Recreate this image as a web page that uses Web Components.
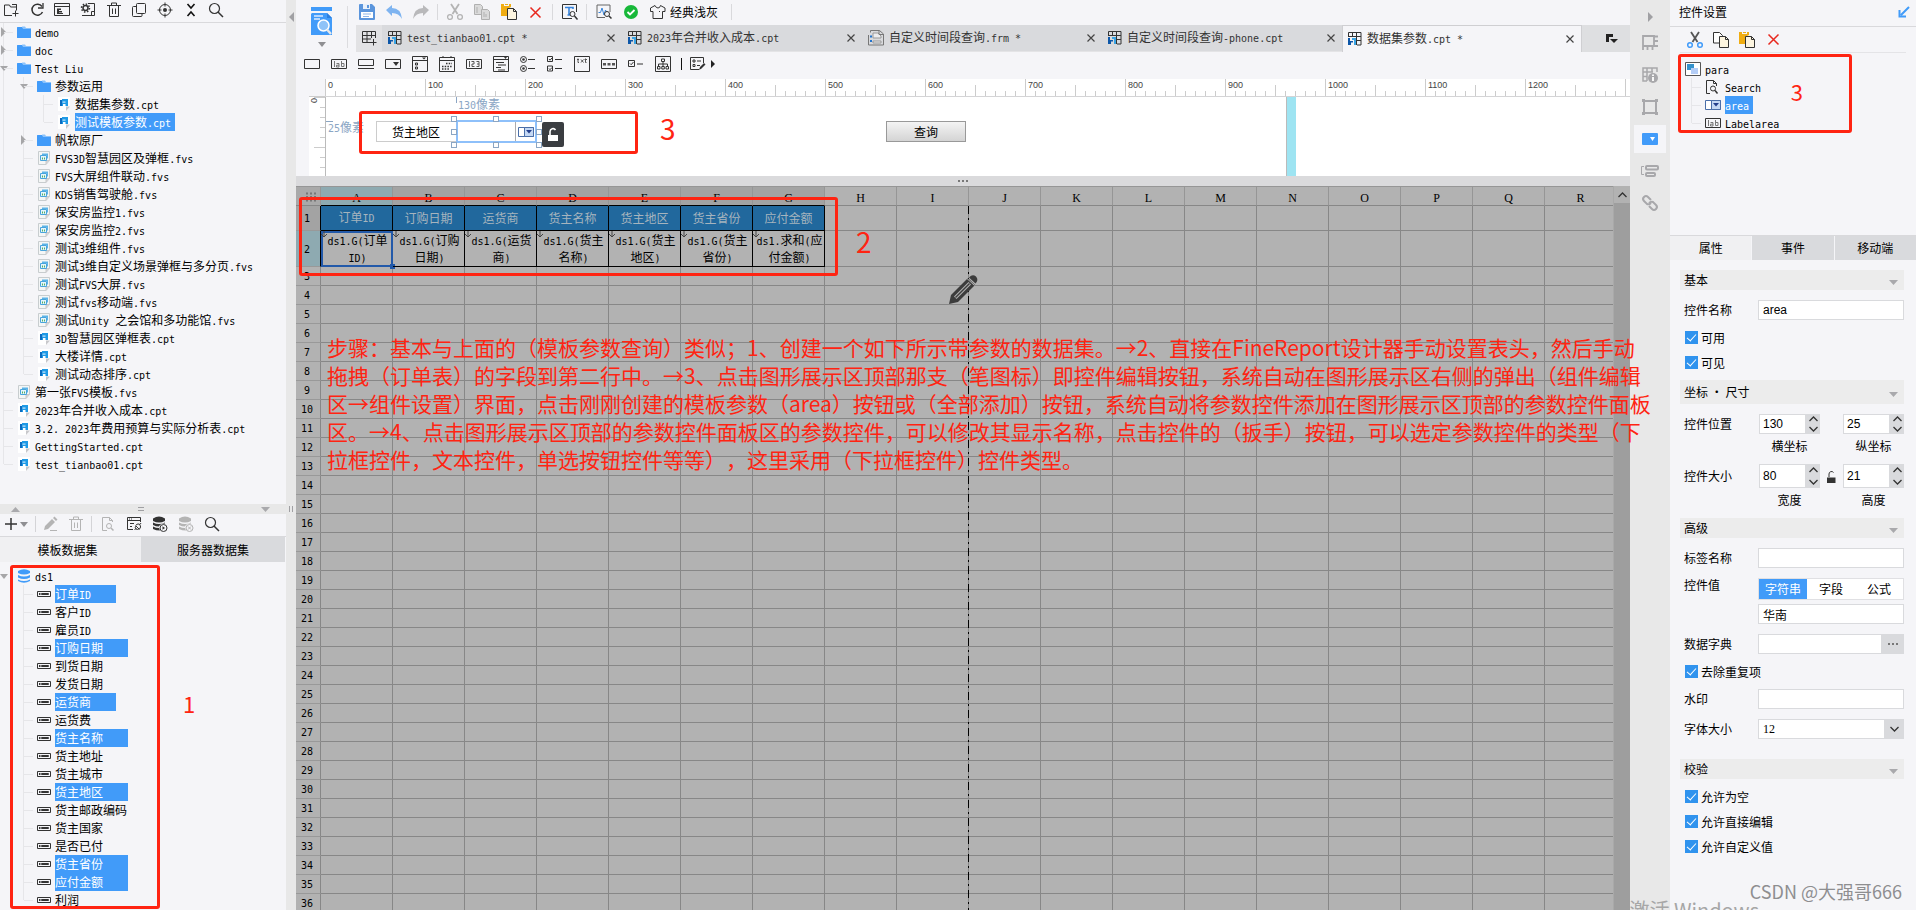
<!DOCTYPE html>
<html lang="zh-CN">
<head>
<meta charset="utf-8">
<title>FineReport 设计器</title>
<style>
html,body{margin:0;height:100%}
body{font:12px/18px "Noto Sans CJK SC",sans-serif;color:#000;background:#f5f5f8;overflow:hidden}
</style>
</head>
<body>
<designer-app></designer-app>
<script>
const BASE = `*{box-sizing:border-box}
button{font:inherit;color:inherit;border:0;padding:0;margin:0;background:none;display:inline-flex;align-items:center;justify-content:center}
input,select{font:inherit;margin:0}
.l{font-family:"DejaVu Sans Mono",monospace;font-size:10px;white-space:pre}`;

/* Latin runs are set in the narrow mono face beside the 12px CJK glyphs */
const mix = s => s.replace(/[\x20-\x7e]+/g, m => `<span class="l">${m}</span>`);

const def = (name, css, html, after) => customElements.define(name, class extends HTMLElement {
  constructor() {
    super();
    this.attachShadow({ mode: 'open' });
  }
  connectedCallback() {
    const t = document.createElement('template');
    t.innerHTML = `<style>${BASE}${css}</style>${typeof html === 'function' ? html(this) : html}`;
    this.shadowRoot.replaceChildren(t.content.cloneNode(true));
    if (after) after(this);
  }
});

const K = '#333', G = '#b4b4b4', B = '#419bf9';
const st = (c, w = 1) => `fill="none" stroke="${c}" stroke-width="${w}"`;
const ICONS = {
  folder: [14, 12, `<path d="M0 1.500Q0 1 .5 1H5l1.500 1H14v9.500q0 .5-.5.500H.5Q0 12 0 11.500z" fill="${B}"/><path d="M5 .5h3L9 2h5v1H6z" fill="#8cc3fb"/>`],
  cpt: [12, 14, '<path d="M0 0h12v9.500L8 14H0z" fill="#fff"/><path d="M12 9.500H8V14z" fill="#c8c8cb"/><path d="M2 3h3v6H2z" fill="#0c6cc0"/><path d="M4 2h6v7H7.500V7H5v2H4z" fill="#1f9ae6"/><path d="M4.500 4.500h3v1.200h-3z" fill="#cfe8fa"/>'],
  fvs: [12, 14, '<path d="M.5.5h11v9L8 13.500H.5z" fill="#f4f6f6" stroke="#c8cdcf"/><path d="M11.500 9.500H8v4" fill="#d4d4d6" stroke="#c8c8ca"/><path d="M4 2.500h6v5H9V4H4z" fill="#5cb4e8"/><path d="M2.500 4.500h6v5h-6z" fill="#e6f4fb" stroke="#48a4dc"/><path d="M4 6.500h1v2H4zM6 6.500h1v2H6z" fill="#52b06a"/>'],
  db: [12, 14, `<path d="M0 2q6-3.500 12 0v2q-6 3-12 0zM0 6q6 3 12 0v2.500q-6 3-12 0zM0 10.500q6 3 12 0V12q-6 3.500-12 0z" fill="${B}"/>`],
  field: [14, 6, `<path d="M.5.5h13v5H.5zM4.500 2.500h7v1h-7z" ${st(K)}/><path d="M2 2h1.500v2H2z" fill="${K}"/>`],
  newfolder: [16, 16, `<path d="M9 13.500H1.500V3h5l1 2h6V2.500H9M13.500 2.500v6M9.500 11.500h6M12.500 8.500v6" ${st(K)}/>`],
  refresh: [16, 16, `<path d="M13 4.500A5.500 5.500 0 1 0 13.500 10" ${st(K, 1.5)}/><path d="M14 1v5H9" ${st(K, 1.3)}/>`],
  tplpage: [16, 16, `<path d="M.5 1.500h15v12H.5zM.5 4.500h15" ${st(K)}/><path d="M3 6.500h4v1.500H5V9h3v1.500H5V11h4v1H3z" fill="${K}"/>`],
  gearpage: [16, 16, `<path d="M8 1.500h6.500v12H2M14.500 9.500h-3v4" ${st(K)}/><circle cx="5.500" cy="6" r="2.500" ${st(K, 1.5)}/><circle cx="5.500" cy="6" r="4" ${st(K, 1.5)} stroke-dasharray="1.500 1.600"/>`],
  trash: [14, 16, `<path d="M0 3.500h14M4.500 3V1h5v2M2.500 4v10.500h9V4M5.500 6.500v5.500M8.500 6.500v5.500" ${st(K)}/>`],
  trashg: [14, 16, `<path d="M0 3.500h14M4.500 3V1h5v2M2.500 4v10.500h9V4M5.500 6.500v5.500M8.500 6.500v5.500" ${st(G)}/>`],
  copy2: [14, 16, `<rect x="4.500" y="1.500" width="9" height="10" rx="1" ${st(K)}/><path d="M4 4.500H1.500q-1 0-1 1v8q0 1 1 1H9q1 0 1-1V12" ${st(K)}/>`],
  target: [16, 16, `<circle cx="8" cy="8" r="5.500" ${st(K)}/><circle cx="8" cy="8" r="2" fill="${K}"/><path d="M8 .5v4M8 11.500v4M.5 8h4M11.500 8h4" ${st(K)}/>`],
  collapse: [10, 14, '<path d="M1.500 1l3.500 4 3.500-4M1.500 13l3.500-4 3.500 4" fill="none" stroke="#111" stroke-width="1.600"/>'],
  search: [16, 16, `<circle cx="6.500" cy="6.500" r="5" ${st(K, 1.2)}/><path d="M10 10l5 5" ${st(K, 1.5)}/>`],
  plus: [12, 12, `<path d="M6 0v12M0 6h12" ${st(K, 1.5)}/>`],
  down: [8, 5, '<path d="M0 0h8L4 5z" fill="#8f8f92"/>'],
  downg: [10, 5, '<path d="M0 0h9L4.500 5z" fill="#a9a9ac"/>'],
  upg: [10, 5, '<path d="M0 5h9L4.500 0z" fill="#a9a9ac"/>'],
  lefta: [5, 10, '<path d="M5 0v10L0 5z" fill="#a0a0a3"/>'],
  righta: [5, 10, '<path d="M0 0v10l5-5z" fill="#a0a0a3"/>'],
  rightk: [4, 8, '<path d="M0 0v8l4-4z" fill="#222"/>'],
  eq: [6, 4, '<path d="M0 .5h6M0 3.500h6" stroke="#a0a0a3"/>'],
  bars: [4, 6, '<path d="M.5 0v6M3.500 0v6" stroke="#a0a0a3"/>'],
  pencilg: [16, 16, `<path d="M2 10l7-7 3 3-7 7-4 1zM10 2l1.500-1.500 3 3L13 5z" fill="${G}"/><path d="M7 14.500h7" stroke="${G}"/>`],
  docsearchg: [14, 16, `<path d="M6 14.500H1.500v-13h7l3 3V6M8.500 1.500v3h3" ${st(G)}/><circle cx="8" cy="10" r="2.500" ${st(G)}/><path d="M10 12l2.500 2.500" stroke="${G}" stroke-width="1.500"/>`],
  winplug: [16, 16, `<path d="M7 13.500H1.500v-12h13V6M1.500 4.500h13M4 7.500h4M4 10.500h2" ${st(K)}/><path d="M3 3h1M5 3h1" stroke="${K}"/><path d="M8.500 14l1.500-1.500M9.500 9.500l4 4M10 9q2-2 4-.5l1-1.500M13.500 13q2-2 .500-4M10 10q-1.500 2 0 3 1.500 1 3-.2" ${st(K)}/>`],
  dbplay: [16, 16, `<path d="M1 2.500q6-4 12 0V5q-6 3-12 0zM1 6.500q6 3 12 0v1q-5 0-6 3-3 0-6-1.500zM1 10.500q3 1.500 6 1.500l1 2.500q-4 0-7-1.500z" fill="${K}"/><circle cx="11.500" cy="12" r="3.500" fill="#f5f5f8" stroke="${K}"/><path d="M10.500 10.300v3.400l2.500-1.700z" fill="${K}"/>`],
  dbx: [16, 16, `<path d="M1 2.500q6-4 12 0V5q-6 3-12 0zM1 6.500q6 3 12 0v1q-5 0-6 3-3 0-6-1.500zM1 10.500q3 1.500 6 1.500l1 2.500q-4 0-7-1.500z" fill="${G}"/><circle cx="11.500" cy="12" r="3.500" fill="#f5f5f8" stroke="${G}"/><path d="M10 10.500l3 3M13 10.500l-3 3" stroke="${G}"/>`],
  preview: [22, 30, `<path d="M0 0h21v4H0z" fill="${B}"/><path d="M1 6h15l5 5v17H0V7z" fill="${B}"/><path d="M16 6v5h5" fill="#2b7fe0"/><path d="M3 9h9M3 12h6" stroke="#dcecff" stroke-width="1.500"/><circle cx="12.500" cy="18.500" r="5.500" fill="#8fc3f8" stroke="#fff" stroke-width="1.500"/><path d="M16 22.500l4 4.500" stroke="#e8e8e8" stroke-width="2.500"/>`],
  save: [16, 16, '<path d="M0 1q0-1 1-1h12l3 3v12q0 1-1 1H1q-1 0-1-1z" fill="#5b95dc"/><path d="M4 0h7v5H4z" fill="#e8f0fa"/><path d="M8 1h2v3H8z" fill="#5b95dc"/><path d="M2 8h12v6H2z" fill="#fff"/><path d="M4 10h8M4 12.500h6" stroke="#8fb6e8"/>'],
  undo: [16, 16, '<path d="M0 6l6-5v3q9 0 10 11-3-6-10-6v3z" fill="#7fb4f0"/>'],
  redo: [16, 16, '<path d="M16 6l-6-5v3Q1 4 0 15q3-6 10-6v3z" fill="#b9b9bb"/>'],
  cutg: [16, 16, `<path d="M4 0l6.500 10M12 0L5.500 10" ${st(G, 1.800)}/><circle cx="3" cy="13" r="2.400" ${st(G, 1.300)}/><circle cx="13" cy="13" r="2.400" ${st(G, 1.300)}/>`],
  cut: [16, 16, `<path d="M4 0l6.500 10M12 0L5.500 10" ${st('#555', 1.800)}/><circle cx="3" cy="13" r="2.300" ${st(B, 1.500)}/><circle cx="13" cy="13" r="2.300" ${st(B, 1.500)}/>`],
  copyg: [16, 16, '<path d="M.5.5h6l2 2v8h-8z" fill="#dadada" stroke="#b0b0b0"/><path d="M7.500 5.500h6l2 2v8h-8z" fill="#dadada" stroke="#b0b0b0"/><path d="M3 3v6M10 8v5M12 10v3" stroke="#b0b0b0"/>'],
  copy: [16, 16, '<path d="M.5.500h6l3 3v7.500h-9z" fill="#fff" stroke="#333"/><path d="M6.500 4.500h6l3 3v8h-9z" fill="#fdf5e0" stroke="#333"/><path d="M12.500 4.500v3h3" fill="none" stroke="#333"/>'],
  paste: [16, 16, '<path d="M0 0h3v2h5V0h2v3L6 5v7H0z" fill="#f0ad12"/><path d="M4 0h3v1H4z" fill="#f0ad12"/><path d="M6.500 4.500h6l3 3v8h-9z" fill="#fdf5e0" stroke="#333"/><path d="M12.500 4.500v3h3" fill="none" stroke="#333"/>'],
  redx: [11, 11, '<path d="M.5.5l10 10M10.500.5l-10 10" stroke="#e8281e" stroke-width="1.500"/>'],
  tsearch: [16, 16, `<path d="M10 14.500H.5V.5h14V8" ${st(K)}/><path d="M3 3.500h8V5M7 3v8M5.500 11h3" ${st('#3584dd', 1.600)}/><circle cx="10.500" cy="10" r="2.500" fill="#f5f5f8" stroke="${K}"/><path d="M12.500 12l3 3.500" stroke="${K}" stroke-width="1.500"/>`],
  pulse: [16, 16, `<path d="M9 13.500H1V1h13v7" ${st('#666')}/><path d="M2.500 8.500h2L6 4l2 7 1.500-5 1 2" ${st('#3584dd')}/><circle cx="11" cy="10" r="2.500" fill="#f5f5f8" stroke="${K}"/><path d="M13 12l2.500 2.500" stroke="${K}" stroke-width="1.500"/>`],
  ok: [14, 14, '<circle cx="7" cy="7" r="7" fill="#18b83a"/><path d="M3.500 7l2.500 2.500L10.500 5" fill="none" stroke="#fff" stroke-width="1.800"/>'],
  shirt: [16, 16, `<path d="M5 1.500L.5 4v3.500H3v7h9.500v-7H15V4l-4.500-2.500q-.5 2.500-2.500 2.500T5 1.500zM9 7.500h1" ${st(K)}/>`],
  gridadd: [15, 15, `<path d="M8 11.500H.5V.5h13V7M.5 4.500h13M.5 8H9M5 .5v11M9.500.5V7M8 11.500h6.500M11.500 8v6.500" ${st(K)}/>`],
  tabcpt: [14, 14, '<path d="M.5 5V.5h12.500V13H9M.5 4.500H13M4.500.5v4M8.500.5V13M9 8.500h4" fill="none" stroke="#333"/><path d="M0 6h2v3h3v1.500H3V13H0z" fill="#0c56a8"/><path d="M4 6h4v7H6V8H4z" fill="#39a4e4"/>'],
  tabfrm: [16, 16, '<path d="M2.500 2.500v-2h9l4 3.500v11H.5V5" fill="none" stroke="#777"/><path d="M5 3h5l3 3v2H5zM5 11h8v2H5z" fill="#ececee" stroke="#999"/><path d="M11 .5v4h4" fill="none" stroke="#777"/><path d="M2 5.500h2v2H2zM2 10h2v2H2z" fill="#2273cc"/>'],
  close: [8, 8, '<path d="M.5.5l7 7M7.500.5l-7 7" stroke="#444" stroke-width="1.200"/>'],
  overflow: [12, 10, '<path d="M0 0h7v3H3v5H0z" fill="#222"/><path d="M4 5h8L8 9z" fill="#222"/>'],
  w0: [16, 10, `<path d="M.5.5h15v9H.5z" ${st(K)}/>`],
  w1: [16, 10, `<path d="M.5.5h15v9H.5z" ${st(K)}/><path d="M3.500 2v6M5.500 4.500h2.500V8H5.500V6.200H8M10.500 2v5.500H13v-3h-2.500" ${st('#777')}/>`],
  w2: [16, 10, `<path d="M.5.5h15v6H.5zM0 9.500h16" ${st(K)}/>`],
  w3: [16, 10, `<path d="M.5.500h15v9H.5z" ${st(K)}/><path d="M8 3h6l-3 4z" fill="${K}"/>`],
  w4: [16, 16, `<path d="M.5.500h15v15H.5zM.5 4.500h15M3.500 7h2v2h-2zM3.500 11h2v2h-2z" ${st(K)}/><path d="M10 1.500h4l-2 2z" fill="${K}"/>`],
  w5: [16, 16, `<path d="M.5 1.500h15v14H.5zM.5 4.500h15M4 0v2M12 0v2" ${st(K)}/><path d="M7 7.500h6M3 10.500h10M3 13h7" stroke="${K}" stroke-width="1.600" stroke-dasharray="1.500 1.200"/>`],
  w6: [16, 10, `<path d="M.5.5h15v9H.5z" ${st(K)}/><path d="M3.500 2v6M5.500 2.500h2.500v2.500H6v2.500h2.500M10.500 2.500h2.500v5h-2.500M11 5h2" ${st('#555')}/>`],
  w7: [16, 16, `<path d="M.5.500h15v15H.5zM.5 3.500h15M3 6.500h8M5 9h8M3 11.500h5M5 14h7" ${st(K)}/><path d="M11 1h3l-1.500 2z" fill="${K}"/>`],
  w8: [15, 16, `<circle cx="3.500" cy="3.500" r="3" ${st(K)}/><circle cx="3.500" cy="3.500" r="1.300" fill="${K}"/><circle cx="3.500" cy="12.500" r="3" ${st(K)}/><circle cx="3.500" cy="12.500" r="1.300" fill="${K}"/><path d="M8 3.500h7M8 12.500h7" stroke="${K}"/>`],
  w9: [15, 16, `<path d="M.5.5h5v5h-5zM.5 10h5v5h-5zM8 3.500h7M8 12.500h7M2 3l1 1.200L5 2M2 12.500l1 1.200 2-2.200" ${st(K)}/>`],
  w10: [16, 16, `<path d="M.5.5h15v15H.5z" ${st(K)}/><path d="M4 2.500v4h1M3 3.500h2M7 3.500l2.500 3M9.500 3.500L7 6.500M11.500 2.500v4h1M10.500 3.500h2.500" ${st('#555')}/>`],
  w11: [16, 10, `<path d="M.5.500h15v9H.5z" ${st(K)}/><path d="M2 4h3v2.500H2zM6.500 4h3v2.500h-3zM11 4h3v2.500h-3z" fill="#555"/>`],
  w12: [15, 8, `<path d="M.5.500h6v6h-6zM9 4h6M2 3.500l1.200 1.200L5.500 2" ${st(K)}/>`],
  w13: [16, 16, `<path d="M.5.500h15v15H.5zM6.500 3h3v2.500h-3zM2.500 10.500h2.500v2.500H2.500zM6.800 10.500h2.500v2.500H6.800zM11 10.500h2.500v2.500H11zM8 5.500v5M3.500 10V8h9v2" ${st(K)}/>`],
  w14: [16, 16, `<path d="M9 13.500H.5v-12h13V7M3 4h2v2H3zM7 5h4M3 8.500h2v2H3zM7 9.500h3" ${st(K)}/><path d="M9 14l1-3 4-4 1.500 1.500-4 4z" fill="${K}"/>`],
  combo: [16, 10, '<path d="M.5.500h15v9H.5z" fill="#fff" stroke="#4a6ea8"/><path d="M6.500.500h9v9h-9z" fill="#c4d8f4" stroke="#4a6ea8"/><path d="M8 3h6L11 6.500z" fill="#243f8c"/>'],
  unlockw: [12, 16, '<path d="M3 8V4.500a3 3 0 0 1 5.500-1.500" fill="none" stroke="#fff" stroke-width="1.600"/><path d="M1 8h10v6H1z" fill="#fff"/>'],
  unlock: [9, 14, '<path d="M2 7V4a2.500 2.500 0 0 1 4.500-1.500" fill="none" stroke="#333"/><path d="M0 7.500h8.500V13H0z" fill="#333"/>'],
  pencil: [30, 30, '<path d="M1 29l2-9L20 3l7 7-17 17z" fill="#3c3c3c"/><path d="M6 21.500L20.500 7l2.500 2.500L8.500 24z" fill="#b2b2b2"/><path d="M7.500 22.500L21.500 8.500" stroke="#3c3c3c" stroke-width="1.500"/><path d="M19 3.500l7.500 7" stroke="#b2b2b2" stroke-width="1"/><path d="M21 2.500q3.500-4 7-1 3 3.500-.5 7z" fill="#3c3c3c"/>'],
  dots: [11, 9, '<path d="M1 1.500h11M1 5h11M1 8.500h11" stroke="#777" stroke-width="2" stroke-dasharray="2 2"/>'],
  dot3: [11, 3, '<path d="M0 0h2v2H0zM4 0h2v2H4zM8 0h2v2H8z" fill="#777"/>'],
  chevu: [9, 6, '<path d="M.5 5l4-4 4 4" fill="none" stroke="#333" stroke-width="1.300"/>'],
  chevd: [9, 6, '<path d="M.5 1l4 4 4-4" fill="none" stroke="#333" stroke-width="1.300"/>'],
  r1: [16, 16, '<path d="M1 1h11v10H1zM1 1v14M5.500 11v4M10.500 11v4M12 1.500h4M12 6h4M12 11h4" fill="none" stroke="#a8a8ab" stroke-width="1.800"/>'],
  r2: [16, 16, '<path d="M5 14H1V1h14v4M1 5h10M5 1v13M10 1v4M1 9.500h4" fill="none" stroke="#a8a8ab" stroke-width="1.500"/><circle cx="11" cy="11" r="5" fill="#a8a8ab"/><path d="M11 7.500v1.500M11 10v4" stroke="#fff" stroke-width="1.800"/>'],
  r3: [16, 16, '<path d="M2 2h12v12H2z" fill="none" stroke="#a8a8ab" stroke-width="2"/><path d="M0 0h3v3H0zM13 0h3v3h-3zM0 13h3v3H0zM13 13h3v3h-3z" fill="#a8a8ab"/>'],
  r4: [16, 12, `<rect width="16" height="12" rx="1" fill="${B}"/><path d="M8 4h5l-2.500 4z" fill="#fff"/>`],
  r5: [18, 12, '<path d="M3 1.500H.5v8H3" fill="none" stroke="#a8a8ab"/><rect x="5" y="1" width="12" height="3.500" rx="1" fill="none" stroke="#a8a8ab" stroke-width="2"/><rect x="5" y="8" width="9" height="3" rx="1" fill="none" stroke="#a8a8ab" stroke-width="2"/>'],
  r6: [16, 16, '<path d="M9 5L6 2Q4 0 2 2T2 6l3 3q2 1 4-1M7 11l3 3q2 2 4 0t0-4l-3-3Q9 6 7 8" fill="none" stroke="#a8a8ab" stroke-width="2"/>'],
  pin: [12, 12, `<path d="M11 1L3 9M1.500 4v6.500H8" ${st(B, 2)}/>`],
  para: [16, 14, '<path d="M.5.500h15v13H.5z" fill="#fff" stroke="#555"/><path d="M2 2h7v6H2z" fill="#3492cc"/><path d="M6 6h7v6H6z" fill="#b4cdf6"/>'],
  docsearch: [14, 14, `<path d="M5 13.500H1.500V.5h7l3 3V6M8.500.5v3h3" ${st(K)}/><circle cx="8" cy="8.500" r="2.500" ${st(K)}/><path d="M10 10.500l2.500 3" stroke="${K}" stroke-width="1.500"/>`],
  mark: [7, 7, '<path d="M3 0v6M0 3l3 3 3-3" fill="none" stroke="#444"/>']
};

def('app-icon', ':host{display:inline-flex;flex:none}svg{display:block;overflow:visible}', el => {
  const [w, h, body] = ICONS[el.getAttribute('name')];
  return `<svg width="${w}" height="${h}" viewBox="0 0 ${w} ${h}" aria-hidden="true">${body}</svg>`;
});
const ic = n => `<app-icon name="${n}"></app-icon>`;
const ib = (n, label = n) => `<button type="button" aria-label="${label}">${ic(n)}</button>`;

/* Tree rows: [depth, icon, text, state] */
const FILES = [
  [0, 'folder', 'demo', 'closed'], [0, 'folder', 'doc', 'closed'], [0, 'folder', 'Test Liu', 'open'],
  [1, 'folder', '参数运用', 'open'], [2, 'cpt', '数据集参数.cpt'], [2, 'cpt', '测试模板参数.cpt', 'sel'],
  [1, 'folder', '帆软原厂', 'closed'], [1, 'fvs', 'FVS3D智慧园区及弹框.fvs'], [1, 'fvs', 'FVS大屏组件联动.fvs'],
  [1, 'fvs', 'KDS销售驾驶舱.fvs'], [1, 'fvs', '保安房监控1.fvs'], [1, 'fvs', '保安房监控2.fvs'],
  [1, 'fvs', '测试3维组件.fvs'], [1, 'fvs', '测试3维自定义场景弹框与多分页.fvs'], [1, 'fvs', '测试FVS大屏.fvs'],
  [1, 'fvs', '测试fvs移动端.fvs'], [1, 'fvs', '测试Unity 之会馆和多功能馆.fvs'], [1, 'cpt', '3D智慧园区弹框表.cpt'],
  [1, 'cpt', '大楼详情.cpt'], [1, 'cpt', '测试动态排序.cpt'], [0, 'fvs', '第一张FVS模板.fvs'],
  [0, 'cpt', '2023年合并收入成本.cpt'], [0, 'cpt', '3.2. 2023年费用预算与实际分析表.cpt'],
  [0, 'cpt', 'GettingStarted.cpt'], [0, 'cpt', 'test_tianbao01.cpt']];
const DS = [[0, 'db', 'ds1', 'open'], ...[
  ['订单ID', 1], ['客户ID'], ['雇员ID'], ['订购日期', 1], ['到货日期'], ['发货日期'], ['运货商', 1], ['运货费'], ['货主名称', 1],
  ['货主地址'], ['货主城市'], ['货主地区', 1], ['货主邮政编码'], ['货主国家'], ['是否已付'], ['货主省份', 1], ['应付金额', 1], ['利润']
].map(([t, s]) => [1, 'field', t, s ? 'sel' : ''])];
const PARA = [[0, 'para', 'para', ''], [1, 'docsearch', 'Search', ''], [1, 'combo', 'area', 'sel'], [1, 'w1', 'Labelarea', '']];
const TREES = { files: FILES, ds: DS, para: PARA };

def('tree-view', `
:host{display:block;--end:4px}
:host([src=ds]){--end:25px}
ul{list-style:none;margin:0;padding:0}
li{display:flex;height:18px;align-items:center;white-space:nowrap}
.g{width:20px;height:18px;flex:none;position:relative}
.g.own{width:17px}
.v::before{content:"";position:absolute;left:3px;top:0;bottom:0;width:1px;background:#e6e6e9}
.half::before{bottom:9px}
.h::after{content:"";position:absolute;left:4px;top:9px;width:9px;height:1px;background:#e6e6e9}
.arr{position:absolute;left:1px;top:4px;width:0;height:0}
.arr.closed{border:5px solid transparent;border-left-color:#a6a6a8;border-right:0}
.arr.open{border:4px solid transparent;border-top:5px solid #a6a6a8;left:0;top:7px}
.i{width:14px;flex:none;display:flex;justify-content:center}
:host([src=para]) .i{width:16px;justify-content:flex-start}
.t{margin-left:4px;padding-right:var(--end);height:18px;line-height:18px}
.t.sel{background:#419bf9;color:#fff}
`, el => {
  const src = el.getAttribute('src'), rows = TREES[src];
  const more = (i, l) => {
    for (let j = i + 1; j < rows.length; j++) {
      if (rows[j][0] < l) return false;
      if (rows[j][0] === l) return true;
    }
    return false;
  };
  return '<ul>' + rows.map(([d, icon, text, state = ''], i) => {
    let g = '';
    const skip = src === 'files' ? 0 : 1;
    for (let l = 0; l < d; l++) g += `<span class="g ${l >= skip && more(i, l) ? 'v' : ''}"></span>`;
    const arrow = state === 'open' || state === 'closed';
    const own = d >= skip ? (more(i, d) ? 'v h' : 'v half h') : '';
    g += `<span class="g own ${own}">${arrow ? `<span class="arr ${state}"></span>` : ''}</span>`;
    return `<li>${g}<span class="i">${ic(icon)}</span><span class="t ${state}">${mix(text)}</span></li>`;
  }).join('') + '</ul>';
});

def('file-panel', `
:host{display:flex;flex-direction:column;height:504px;flex:none}
.bar{border-bottom:1px solid #d9d9dc;height:23px}
.row{display:flex;width:231px;height:20px;margin-left:-2px}
.row button{flex:1}
`, `<div class="bar"><div class="row">${['newfolder', 'refresh', 'tplpage', 'gearpage', 'trash', 'copy2', 'target', 'collapse', 'search'].map(n => ib(n)).join('')}</div></div>
<tree-view src="files"></tree-view>`);

def('data-panel', `
:host{display:flex;flex-direction:column;flex:1;min-height:0;overflow:hidden}
.bar{display:flex;height:23px;flex:none;align-items:center;border-bottom:1px solid #d9d9dc;padding:0 0 2px 4px}
.bar button{width:25px;height:20px;flex:none}
.bar .add{width:24px;gap:3px;margin-right:7px}
.sep{width:1px;height:16px;background:#d4d4d7;margin:0 2px 0 0}
.bar .g{margin:0 3px}
.bar .g~button{width:26px}
.tabs{display:flex;height:25px;flex:none;margin-right:1px}
.tabs button{flex:1;background:#d9dadd}
.tabs button.on{background:#f0f0f2;flex:0 0 141px;padding-right:6px}
tree-view{margin-top:5px}
`, `<div class="bar"><button class="add" type="button" aria-label="添加">${ic('plus')}${ic('down')}</button><span class="sep"></span>${ib('pencilg')}${ib('trashg')}<span class="sep g"></span>${['docsearchg', 'winplug', 'dbplay', 'dbx', 'search'].map(n => ib(n)).join('')}</div>
<div class="tabs" role="tablist"><button class="on" role="tab">模板数据集</button><button role="tab">服务器数据集</button></div>
<tree-view src="ds"></tree-view>`);

def('left-dock', `
:host{display:flex;flex-direction:column;width:286px;min-height:0;background:#f5f5f8}
.split{height:10px;flex:none;background:#e8e8e8;display:flex;align-items:center;justify-content:space-between;padding:0 15px 0 11px}
`, `<file-panel></file-panel><div class="split">${ic('upg')}${ic('eq')}${ic('downg')}</div><data-panel></data-panel>`);

def('dock-split', `
:host{display:flex;flex-direction:column;align-items:center;width:10px;background:#e8e8e8;padding-top:12px}
.m{margin-top:476px}
`, `${ic('lefta')}<span class="m">${ic('bars')}</span>`);

def('doc-bar', `
:host{display:grid;grid-template-columns:60px 1fr;height:52px;background:#f5f5f8}
.prev{display:flex;flex-direction:column;align-items:center;padding:7px 0 0;width:52px;position:relative}
.prev button{flex-direction:column;gap:5px}
.prev::after{content:"";position:absolute;right:0;top:6px;height:42px;width:1px;background:#dcdcdf}
.r{display:flex;flex-direction:column;min-width:0}
.tools{display:flex;height:25px;align-items:center;margin-left:-3px;padding-bottom:1px}
.tools button{width:27px;height:22px;flex:none}
.tools .skin{width:auto;gap:4px;margin:0 10px 0 6px}
.sep{width:1px;height:16px;background:#d9d9dc;margin:0 3px}
.tabs{display:flex;height:27px;background:#dedfe1}
.tabs .add{width:26px;background:#e2e2e4}
.tab{width:240px;flex:0 1 240px;min-width:0;background:#d9dadd;color:#333;display:flex;align-items:center;padding:0 7px 0 6px;border-bottom:1px solid #e4e4e6}
.tab.on{background:#f5f5f8;border:1px solid #cfcfd2;border-width:1px 1px 0;padding:0 7px 0 5px}
.tab span.n{margin-left:5px;flex:1;white-space:nowrap;text-align:left}
.more{margin-left:auto;width:36px}
`, `<div class="prev"><button type="button" aria-label="预览">${ic('preview')}${ic('down')}</button></div>
<div class="r"><div class="tools">${ib('save')}${ib('undo')}${ib('redo')}<span class="sep"></span>${ib('cutg')}${ib('copyg')}${ib('paste')}${ib('redx')}<span class="sep"></span>${ib('tsearch')}<span class="sep"></span>${ib('pulse')}${ib('ok')}<button class="skin" type="button">${ic('shirt')}经典浅灰</button><span class="sep"></span></div>
<div class="tabs"><button class="add" type="button" aria-label="新建">${ic('gridadd')}</button>
${[['tabcpt', 'test_tianbao01.cpt *'], ['tabcpt', '2023年合并收入成本.cpt'], ['tabfrm', '自定义时间段查询.frm *'], ['tabcpt', '自定义时间段查询-phone.cpt'], ['tabcpt', '数据集参数.cpt *', 'on']].map(([i, t, c = '']) => `<div class="tab ${c}">${ic(i)}<span class="n">${mix(t)}</span>${ib('close', '关闭')}</div>`).join('')}
<button class="more" type="button" aria-label="更多">${ic('overflow')}</button></div></div>`);

def('widget-bar', `
:host{display:flex;height:27px;align-items:center;background:#f5f5f8;padding:0 0 3px 2px}
button{width:27px;height:22px;flex:none}
.sep{width:1px;height:12px;background:#111;margin:0 2px 0 5px}
.a{width:auto}
`, Array.from({ length: 14 }, (_, i) => ib('w' + i, '控件' + (i + 1))).join('') + `<span class="sep"></span>${ib('w14')}<button class="a" type="button" aria-label="更多">${ic('rightk')}</button>`);

def('form-designer', `
:host{display:grid;grid-template:17px 80px / 29px minmax(0,1fr);background:#f5f5f8}
.hr{grid-column:2;display:flex;overflow:hidden;background:
 repeating-linear-gradient(90deg,#ccc 0 1px,transparent 1px 100px) 0 0/100% 17px no-repeat,
 repeating-linear-gradient(90deg,#ccc 0 1px,transparent 1px 50px) 0 6px/100% 11px no-repeat,
 repeating-linear-gradient(90deg,#ccc 0 1px,transparent 1px 10px) 0 12px/100% 5px no-repeat,#fff;
 font:9px/13px "Liberation Sans",sans-serif;color:#444}
.hr span{width:100px;flex:none;padding-left:3px}
.vr{grid-row:2;grid-column:1;margin-left:13px;background:
 repeating-linear-gradient(#ccc 0 1px,transparent 1px 50px) 100% 0/11px 100% no-repeat,
 repeating-linear-gradient(#ccc 0 1px,transparent 1px 10px) 100% 0/5px 100% no-repeat,#fff;
 font:9px/10px "Liberation Sans",sans-serif;color:#444;writing-mode:vertical-rl;display:flex;align-items:flex-end;padding-top:1px;border-top:1px solid #ccc}
.cv{grid-row:2;grid-column:2;background:#fff;display:flex;border-top:1px solid #d4d4d6;overflow:hidden}
.paper{position:relative;width:962px;flex:none;border:1px solid #bbb;border-width:0 1px}
.edge{width:9px;background:#9ee4f2}
.paper>*{position:absolute}
.dim{color:#8ba6c4;line-height:14px;white-space:nowrap}
.tk{background:#8ba6c4}
.lab{left:50px;top:24px;width:81px;height:21px;border:1px solid #ccc;display:flex;align-items:center;padding-left:15px}
.combo{left:130px;top:23px;width:81px;height:23px;border:2px solid #8ec0fa;background:#fff;display:flex;justify-content:flex-end}
.combo input{width:57px;border:0;background:#fff;padding:0;min-width:0}
.combo button{width:20px;border:1px solid #ababae;border-width:0 0 0 1px}
.h{width:6px;height:6px;border:1px solid #8ba6c4;background:#fff}
.lock{left:216px;top:25px;width:22px;height:25px;background:#3a3d41;border-radius:2px}
.q{left:560px;top:24px;width:80px;height:21px;border:1px solid #999;background:linear-gradient(#f4f4f4,#d4d4d4)}
`, `<div class="hr">${Array.from({ length: 13 }, (_, i) => `<span>${i * 100}</span>`).join('')}</div><div class="vr">0</div>
<div class="cv"><div class="paper">
<span class="tk" style="left:130px;top:0;width:1px;height:6px"></span><span class="tk" style="left:0;top:24px;width:7px;height:1px"></span>
<span class="dim" style="left:132px;top:0">${mix('130像素')}</span><span class="dim" style="left:2px;top:23px">${mix('25像素')}</span>
<label class="lab" for="area">货主地区</label>
<div class="combo"><input id="area"><button type="button" aria-label="展开">${ic('combo')}</button></div>
${[[125, 19], [167, 19], [210, 19], [125, 32], [210, 32], [125, 45], [167, 45], [210, 45]].map(([x, y]) => `<span class="h" style="left:${x}px;top:${y}px"></span>`).join('')}
<button class="lock" type="button" aria-label="锁定">${ic('unlockw')}</button>
<button class="q" type="button">查询</button></div><div class="edge"></div></div>`);

const HEAD = ['订单ID', '订购日期', '运货商', '货主名称', '货主地区', '货主省份', '应付金额'];
const EXPR = [['ds1.G(订单', 'ID)'], ['ds1.G(订购', '日期)'], ['ds1.G(运货', '商)'], ['ds1.G(货主', '名称)'], ['ds1.G(货主', '地区)'], ['ds1.G(货主', '省份)'], ['ds1.求和(应', '付金额)']];
const COLS = [...'ABCDEFGHIJKLMNOPQR'];
def('sheet-grid', `
:host{display:flex;flex:1;min-height:0;background:#b2b2b2;overflow:hidden}
.w{flex:1;min-width:0;overflow:hidden;position:relative}
table{border-collapse:separate;border-spacing:0;table-layout:fixed;width:1321px}
th,td{padding:0;border:1px solid #878787;border-width:0 1px 1px 0;height:19px;overflow:hidden;font-weight:400;text-align:center;line-height:14px}
thead th{height:20px;border-right-color:#969696;font:12px/14px "Liberation Serif",serif;border-top:1px solid #969696;padding-top:4px}
thead th:first-child{padding:2px 0 0 4px;background:#a9a9a9}
thead .s{background:#a3a3a3;border-bottom-color:#000}
thead .a,tbody .a{background:#8eaab1}
tbody th{border-bottom-color:#999;padding-right:2px}
.r1 td,.r1 th{height:25px}.r2 td,.r2 th{height:36px}
.r1 th{background:#a3a3a3}
td.d{border-color:#000}.r1 th,.r2 th{border-right-color:#000}
td.b{background:#21689d;color:#a6b4be}
td.e{line-height:15px;position:relative;white-space:nowrap;padding-left:2px}
td.e app-icon{position:absolute;left:0;top:0}
td.cur{outline:2px solid #2259a9;outline-offset:-2px;overflow:visible}
td.cur::after{content:"";position:absolute;right:-3px;bottom:-3px;width:5px;height:5px;background:#2259a9}
.pg{position:absolute;left:672px;top:20px;bottom:0;width:1px;background:repeating-linear-gradient(#000 0 8px,transparent 8px 12px,#000 12px 14px,transparent 14px 18px)}
.pen{position:absolute;left:652px;top:89px}
.sb{width:17px;background:#9e9e9e;border-left:1px solid #a9a9a9}
.sb button{width:16px;height:17px;background:#b2b2b2;display:flex}
`, `<div class="w"><table><colgroup><col style="width:25px">${COLS.map(() => '<col style="width:72px">').join('')}</colgroup>
<thead><tr><th>${ic('dots')}</th>${COLS.map((c, i) => `<th class="${i < 7 ? 's' : ''} ${i ? '' : 'a'}">${c}</th>`).join('')}</tr></thead>
<tbody><tr class="r1"><th>${mix('1')}</th>${COLS.map((_, i) => i < 7 ? `<td class="d b">${mix(HEAD[i])}</td>` : '<td></td>').join('')}</tr>
<tr class="r2"><th class="a">${mix('2')}</th>${COLS.map((_, i) => i < 7 ? `<td class="d e ${i ? '' : 'cur'}">${ic('mark')}${mix(EXPR[i][0])}<br>${mix(EXPR[i][1])}</td>` : '<td></td>').join('')}</tr>
${Array.from({ length: 34 }, (_, r) => `<tr><th>${mix(String(r + 3))}</th>${COLS.map(() => '<td></td>').join('')}</tr>`).join('')}</tbody></table>
<span class="pg"></span><span class="pen">${ic('pencil')}</span></div><div class="sb"><button type="button" aria-label="向上滚动">${ic('chevu')}</button></div>`);

def('work-area', `
:host{display:flex;flex-direction:column;min-width:0;min-height:0}
.split{height:10px;flex:none;background:#dadadc;display:flex;align-items:center;justify-content:center}
doc-bar,widget-bar,form-designer{flex:none}
`, `<doc-bar></doc-bar><widget-bar></widget-bar><form-designer></form-designer><div class="split">${ic('dot3')}</div><sheet-grid></sheet-grid>`);

def('side-rail', `
:host{display:flex;flex-direction:column;align-items:center;width:40px;background:#e8e8e8;padding-top:12px}
button{width:32px;height:28px;margin-top:4px;flex:none}
.first{height:10px;margin:0 0 3px}
.on{background:#f5f5f8}
`, `<button class="first" type="button" aria-label="收起">${ic('righta')}</button>` + [1, 2, 3, 4, 5, 6].map(n => `<button type="button" aria-label="面板${n}" class="${n === 4 ? 'on' : ''}">${ic('r' + n)}</button>`).join(''));

def('prop-head', `
:host{display:flex;height:20px;background:#ececec;align-items:center;justify-content:space-between;padding:0 5px 0 4px;margin-bottom:10px}
app-icon{margin-top:5px}
`, `<slot></slot>${ic('downg')}`);

def('prop-row', `
:host{display:grid;grid-template-columns:74px minmax(0,1fr);padding-left:4px;min-height:20px;align-items:center;margin-bottom:10px}
`, '<slot name="label"></slot><slot></slot>');

def('prop-check', `
:host{display:flex;height:15px;margin:0 0 10px 5px}
label{display:flex;align-items:center;gap:3px}
input{appearance:none;width:13px;height:13px;background:#3093ee;display:grid;place-items:center}
input::before{content:"";width:4px;height:8px;border:solid #fff;border-width:0 1px 1px 0;rotate:42deg;margin-top:-2px}
`, '<label><input type="checkbox" checked><slot></slot></label>');

def('num-box', `
:host{display:flex;flex-direction:column;width:61px}
.f{display:flex;height:20px;background:#d9dadd}
:host([tall]) .f{height:24px}
input{width:47px;flex:none;border:1px solid #d9dadd;background:#fff;padding:0 3px;font:12px "Liberation Sans",sans-serif;appearance:textfield;outline:0}
input::-webkit-inner-spin-button{display:none}
.s{flex:1;display:flex;flex-direction:column}
.s button{flex:1}
label{align-self:center;margin-top:4px;line-height:16px}
`, el => `<div class="f"><input id="n" type="number" value="${el.getAttribute('value')}"><span class="s"><button type="button" aria-label="增加">${ic('chevu')}</button><button type="button" aria-label="减少">${ic('chevd')}</button></span></div><label for="n">${el.getAttribute('label')}</label>`);

def('prop-panel', `
:host{display:flex;flex-direction:column;width:246px;background:#f5f5f8;min-height:0}
.title{display:flex;height:27px;align-items:center;justify-content:space-between;padding:0 6px 2px 9px;border-bottom:1px solid #d9d9dc}
.bar{display:flex;height:26px;align-items:center;margin:0 10px 7px;border-bottom:1px solid #e4e4e7;padding:0 0 0 2px}
.bar button{width:26px;height:22px}
tree-view{margin-left:-2px;height:175px}
.tabs{display:flex;border-top:1px solid #d9d9dc;height:25px;gap:1px}
.tabs button{flex:1;background:#d9dadd}
.tabs .on{background:#f0f0f2}
.body{padding:10px 12px 0 10px;display:flex;flex-direction:column}
.body>*{flex:none}
input{height:20px;border:1px solid #d9dadd;background:#fff;padding:0 4px;width:100%;outline:0;font:12px "Liberation Sans","Noto Sans CJK SC",sans-serif}
.nums{display:flex;justify-content:space-between;padding-left:1px;align-items:flex-start}
.lk{margin-top:6px}
.top{align-items:start}.top label{line-height:20px}
.seg{display:flex;height:22px;background:#fff;border:1px solid #e0e0e3;margin-bottom:4px}
.seg button{flex:1}
.seg .on{background:#419bf9;color:#fff}
.pick{display:flex}.pick button{width:22px;flex:none;background:#d9dadd}
.sel{position:relative;display:flex}
select{appearance:none;width:100%;height:20px;border:1px solid #d9dadd;background:#fff;padding:0 4px;border-radius:0;font:12px "Liberation Serif",serif}
.sel i{position:absolute;right:0;top:0;width:20px;height:20px;background:#d9dadd;display:flex;align-items:center;justify-content:center;pointer-events:none}
`, `<div class="title"><span>控件设置</span>${ic('pin')}</div>
<div class="bar">${ib('cut', '剪切')}${ib('copy', '复制')}${ib('paste', '粘贴')}${ib('redx', '删除')}</div>
<tree-view src="para"></tree-view>
<div class="tabs" role="tablist"><button class="on" role="tab">属性</button><button role="tab">事件</button><button role="tab">移动端</button></div>
<div class="body">
<prop-head>基本</prop-head>
<prop-row><label slot="label" for="nm">控件名称</label><input id="nm" value="area"></prop-row>
<prop-check>可用</prop-check><prop-check>可见</prop-check>
<prop-head style="height:24px">坐标 · 尺寸</prop-head>
<prop-row class="top"><label slot="label">控件位置</label><div class="nums"><num-box value="130" label="横坐标"></num-box><num-box value="25" label="纵坐标"></num-box></div></prop-row>
<prop-row class="top"><label slot="label" style="line-height:24px">控件大小</label><div class="nums"><num-box tall value="80" label="宽度"></num-box><span class="lk">${ic('unlock')}</span><num-box tall value="21" label="高度"></num-box></div></prop-row>
<prop-head>高级</prop-head>
<prop-row><label slot="label" for="tg">标签名称</label><input id="tg"></prop-row>
<prop-row class="top"><label slot="label" for="vl" style="line-height:14px">控件值</label><div><div class="seg"><button class="on" type="button">字符串</button><button type="button">字段</button><button type="button">公式</button></div><input id="vl" value="华南"></div></prop-row>
<prop-row><label slot="label" for="dc">数据字典</label><div class="pick"><input id="dc"><button type="button" aria-label="选择">${ic('dot3')}</button></div></prop-row>
<prop-check>去除重复项</prop-check>
<prop-row><label slot="label" for="wm">水印</label><input id="wm"></prop-row>
<prop-row style="margin-bottom:20px"><label slot="label" for="fs">字体大小</label><div class="sel"><select id="fs"><option>12</option></select><i>${ic('chevd')}</i></div></prop-row>
<prop-head>校验</prop-head>
<prop-check>允许为空</prop-check><prop-check>允许直接编辑</prop-check><prop-check>允许自定义值</prop-check>
</div>`);

/* Free annotations laid over the whole designer */
def('note-layer', `
:host{position:absolute;inset:0;overflow:hidden;pointer-events:none;color:#ff2412}
.bx,.n,p,.wm{position:absolute}
.bx{border:3px solid #ff2412;border-radius:3px}
.n{font-size:22px;line-height:24px}
.n.big{font-size:28px;line-height:30px}
p{margin:0;left:327px;top:333px;font-size:21px;line-height:28px;white-space:nowrap;text-spacing-trim:space-all}
p span{display:block}
.wm{white-space:nowrap}
`, `<div class="bx" style="left:10px;top:565px;width:150px;height:344px"></div>
<div class="bx" style="left:359px;top:111px;width:279px;height:43px"></div>
<div class="bx" style="left:299px;top:197px;width:539px;height:79px"></div>
<div class="bx" style="right:64px;top:54px;width:174px;height:79px"></div>
<span class="n" style="left:183px;top:691px">1</span>
<span class="n big" style="left:660px;top:113px">3</span>
<span class="n big" style="left:856px;top:226px">2</span>
<span class="n" style="right:113px;top:79px">3</span>
<p><span>步骤：基本与上面的（模板参数查询）类似；1、创建一个如下所示带参数的数据集。→2、直接在FineReport设计器手动设置表头，然后手动</span>
<span>拖拽（订单表）的字段到第二行中。→3、点击图形展示区顶部那支（笔图标）即控件编辑按钮，系统自动在图形展示区右侧的弹出（组件编辑</span>
<span>区→组件设置）界面，点击刚刚创建的模板参数（area）按钮或（全部添加）按钮，系统自动将参数控件添加在图形展示区顶部的参数控件面板</span>
<span>区。→4、点击图形展示区顶部的参数控件面板区的参数控件，可以修改其显示名称，点击控件的（扳手）按钮，可以选定参数控件的类型（下</span>
<span>拉框控件，文本控件，单选按钮控件等等），这里采用（下拉框控件）控件类型。</span></p>
<span class="wm" style="right:157px;bottom:-12px;font-size:20px;line-height:24px;color:#a6a6a6">激活 Windows</span>
<span class="wm" style="right:14px;bottom:7px;font-size:18px;line-height:24px;color:#8e8e90">CSDN @大强哥666</span>`);

def('designer-app', `
:host{display:grid;grid-template-columns:auto auto minmax(0,1fr) auto auto;grid-template-rows:minmax(0,1fr);height:100vh;position:relative;overflow:hidden}
`, '<left-dock></left-dock><dock-split></dock-split><work-area></work-area><side-rail></side-rail><prop-panel></prop-panel><note-layer></note-layer>');
</script>
</body>
</html>
